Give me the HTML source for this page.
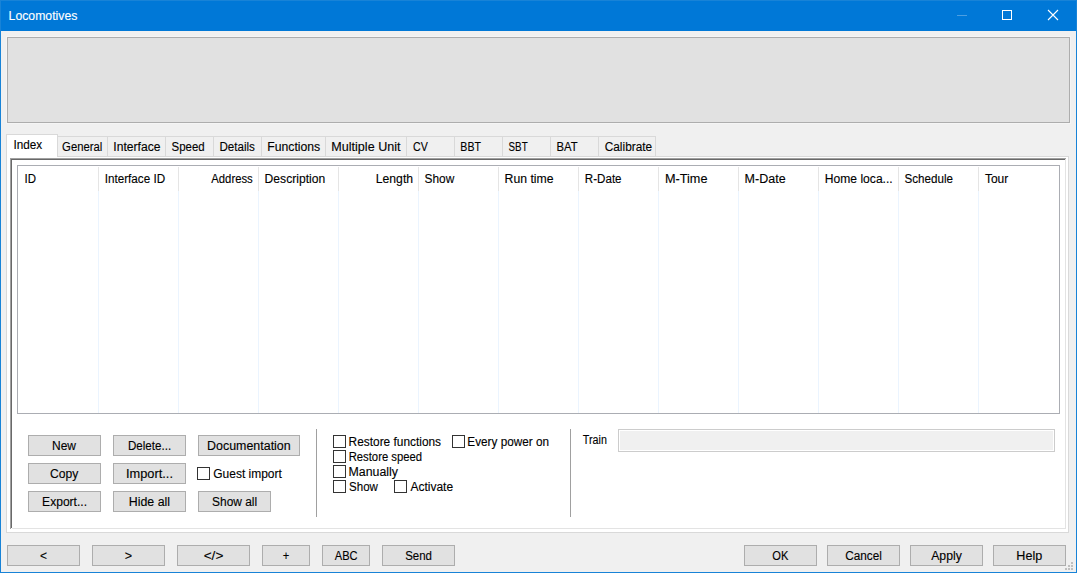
<!DOCTYPE html>
<html><head><meta charset="utf-8"><title>Locomotives</title>
<style>
html,body{margin:0;padding:0}
body{width:1077px;height:573px;overflow:hidden;background:#f0f0f0;position:relative;
 font-family:"Liberation Sans",sans-serif;font-size:12px;line-height:14px;color:#000}
.a{position:absolute;box-sizing:border-box;white-space:nowrap}
.t{z-index:5;-webkit-text-stroke:0.12px currentColor}
.ti{color:#fff}
#tb{left:0;top:0;width:1077px;height:31px;background:#0078d7}
#bl{left:0;top:0;width:1px;height:573px;background:#1883d7}
#br{left:1076px;top:0;width:1px;height:573px;background:#1883d7}
#bb{left:0;top:572px;width:1077px;height:1px;background:#1883d7}
#bt{left:0;top:0;width:1077px;height:1px;background:#1883d7}
#panel{left:7px;top:37px;width:1063px;height:86px;background:#e1e1e1;border:1px solid #adadad;box-shadow:0 0 0 1px #f5f5f5}
.tab{top:136px;height:20px;background:#f0f0f0;border:1px solid #d9d9d9;border-left:none;border-bottom:none}
#tsel{left:6px;top:134px;width:52px;height:23px;background:#fff;border:1px solid #d9d9d9;border-bottom:none;z-index:2}
#pane{left:6px;top:156px;width:1063px;height:377px;background:#fff;border:1px solid #d9d9d9}
.s1{background:#a0a0a0}.s2{background:#696969}.s3{background:#e3e3e3}
#list{left:17px;top:165px;width:1043px;height:249px;border:1px solid #abadb3;background:#fff}
.hd{top:167px;width:1px;height:24px;background:#e5e5e5}
.gl{top:191px;width:1px;height:222px;background:#ebf4fe}
.btn{height:21px;background:#e1e1e1;border:1px solid #adadad}
.cb{width:13px;height:13px;border:1px solid #333;background:#fff}
.sep{top:429px;width:1px;height:88px;background:#a0a0a0}
.g{width:2px;height:2px;background:#bfbfbf}
#train{left:618px;top:429px;width:437px;height:23px;background:#f0f0f0;border:1px solid #ccc;box-shadow:inset 0 0 0 1px #fff}
</style></head><body>
<div class="a" id="tb"></div>
<svg class="a" style="left:950px;top:0" width="120" height="31" viewBox="0 0 120 31">
 <rect x="7" y="15" width="10" height="1" fill="#4c9fe2"/>
 <rect x="52.5" y="10.5" width="9" height="9" fill="none" stroke="#fff" stroke-width="1"/>
 <path d="M98 10 L108 20 M108 10 L98 20" stroke="#fff" stroke-width="1.1" fill="none"/>
</svg>
<div class="a" id="panel"></div>
<div class="a" id="pane"></div>
<div class="a" id="tsel"></div>
<div class="a tab" style="left:58px;width:50px"></div><div class="a tab" style="left:108px;width:58px"></div><div class="a tab" style="left:166px;width:48px"></div><div class="a tab" style="left:214px;width:48px"></div><div class="a tab" style="left:262px;width:64px"></div><div class="a tab" style="left:326px;width:81px"></div><div class="a tab" style="left:407px;width:48px"></div><div class="a tab" style="left:455px;width:48px"></div><div class="a tab" style="left:503px;width:48px"></div><div class="a tab" style="left:551px;width:48px"></div><div class="a tab" style="left:599px;width:57px"></div>
<div class="a s1" style="left:10px;top:158px;width:1056px;height:1px"></div>
<div class="a s1" style="left:10px;top:158px;width:1px;height:371px"></div>
<div class="a s2" style="left:11px;top:159px;width:1054px;height:1px"></div>
<div class="a s2" style="left:11px;top:159px;width:1px;height:369px"></div>
<div class="a s3" style="left:1065px;top:159px;width:1px;height:370px"></div>
<div class="a s3" style="left:12px;top:528px;width:1054px;height:1px"></div>
<div class="a" id="list"></div>
<div class="a hd" style="left:98px"></div><div class="a hd" style="left:178px"></div><div class="a hd" style="left:258px"></div><div class="a hd" style="left:338px"></div><div class="a hd" style="left:418px"></div><div class="a hd" style="left:498px"></div><div class="a hd" style="left:578px"></div><div class="a hd" style="left:658px"></div><div class="a hd" style="left:738px"></div><div class="a hd" style="left:818px"></div><div class="a hd" style="left:898px"></div><div class="a hd" style="left:978px"></div>
<div class="a gl" style="left:98px"></div><div class="a gl" style="left:178px"></div><div class="a gl" style="left:258px"></div><div class="a gl" style="left:338px"></div><div class="a gl" style="left:418px"></div><div class="a gl" style="left:498px"></div><div class="a gl" style="left:578px"></div><div class="a gl" style="left:658px"></div><div class="a gl" style="left:738px"></div><div class="a gl" style="left:818px"></div><div class="a gl" style="left:898px"></div><div class="a gl" style="left:978px"></div>
<div class="a btn" style="left:28px;top:435px;width:73px"></div><div class="a btn" style="left:28px;top:463px;width:73px"></div><div class="a btn" style="left:28px;top:491px;width:73px"></div><div class="a btn" style="left:113px;top:435px;width:73px"></div><div class="a btn" style="left:113px;top:463px;width:73px"></div><div class="a btn" style="left:113px;top:491px;width:73px"></div><div class="a btn" style="left:198px;top:435px;width:102px"></div><div class="a btn" style="left:198px;top:491px;width:73px"></div><div class="a btn" style="left:7px;top:545px;width:73px"></div><div class="a btn" style="left:92px;top:545px;width:73px"></div><div class="a btn" style="left:177px;top:545px;width:73px"></div><div class="a btn" style="left:262px;top:545px;width:48px"></div><div class="a btn" style="left:322px;top:545px;width:48px"></div><div class="a btn" style="left:382px;top:545px;width:73px"></div><div class="a btn" style="left:744px;top:545px;width:73px"></div><div class="a btn" style="left:827px;top:545px;width:73px"></div><div class="a btn" style="left:910px;top:545px;width:73px"></div><div class="a btn" style="left:993px;top:545px;width:73px"></div>
<div class="a cb" style="left:197px;top:467px"></div><div class="a cb" style="left:333px;top:435px"></div><div class="a cb" style="left:452px;top:435px"></div><div class="a cb" style="left:333px;top:450px"></div><div class="a cb" style="left:333px;top:465px"></div><div class="a cb" style="left:333px;top:480px"></div><div class="a cb" style="left:394px;top:480px"></div>
<div class="a sep" style="left:316px"></div>
<div class="a sep" style="left:570px"></div>
<div class="a" id="train"></div>
<div class="a g" style="left:1071px;top:562px"></div><div class="a g" style="left:1068px;top:565px"></div><div class="a g" style="left:1071px;top:565px"></div><div class="a g" style="left:1065px;top:568px"></div><div class="a g" style="left:1068px;top:568px"></div><div class="a g" style="left:1071px;top:568px"></div>
<div class="a t ti" style="left:8px;top:9px;transform-origin:0 0;transform:translateX(0.58px) scaleX(1.0207)">Locomotives</div>
<div class="a t" style="left:13px;top:138px;transform-origin:0 0;transform:translateX(0.38px) scaleX(0.9794)">Index</div>
<div class="a t" style="left:62px;top:140px;transform-origin:0 0;transform:translateX(0.12px) scaleX(0.9430)">General</div>
<div class="a t" style="left:113px;top:140px;transform-origin:0 0;transform:translateX(0.28px) scaleX(1.0099)">Interface</div>
<div class="a t" style="left:171px;top:140px;transform-origin:0 0;transform:translateX(0.57px) scaleX(0.9545)">Speed</div>
<div class="a t" style="left:219px;top:140px;transform-origin:0 0;transform:translateX(0.47px) scaleX(0.9654)">Details</div>
<div class="a t" style="left:267px;top:140px;transform-origin:0 0;transform:translateX(0.20px) scaleX(1.0194)">Functions</div>
<div class="a t" style="left:331px;top:140px;transform-origin:0 0;transform:translateX(0.32px) scaleX(1.0479)">Multiple Unit</div>
<div class="a t" style="left:412px;top:140px;transform-origin:0 0;transform:translateX(0.97px) scaleX(0.8851)">CV</div>
<div class="a t" style="left:460px;top:140px;transform-origin:0 0;transform:translateX(0.34px) scaleX(0.8818)">BBT</div>
<div class="a t" style="left:508px;top:140px;transform-origin:0 0;transform:translateX(0.57px) scaleX(0.8170)">SBT</div>
<div class="a t" style="left:556px;top:140px;transform-origin:0 0;transform:translateX(0.55px) scaleX(0.9382)">BAT</div>
<div class="a t" style="left:604px;top:140px;transform-origin:0 0;transform:translateX(0.73px) scaleX(0.9870)">Calibrate</div>
<div class="a t" style="left:24px;top:172px;transform-origin:0 0;transform:translateX(0.52px) scaleX(0.9569)">ID</div>
<div class="a t" style="left:104px;top:172px;transform-origin:0 0;transform:translateX(0.67px) scaleX(0.9750)">Interface ID</div>
<div class="a t" style="right:824px;top:172px;transform-origin:100% 0;transform:translateX(-0.33px) scaleX(0.9401)">Address</div>
<div class="a t" style="left:264px;top:172px;transform-origin:0 0;transform:translateX(0.61px) scaleX(1.0088)">Description</div>
<div class="a t" style="right:663px;top:172px;transform-origin:100% 0;transform:translateX(-0.62px) scaleX(1.0184)">Length</div>
<div class="a t" style="left:424px;top:172px;transform-origin:0 0;transform:translateX(0.50px) scaleX(0.9900)">Show</div>
<div class="a t" style="left:504px;top:172px;transform-origin:0 0;transform:translateX(0.60px) scaleX(1.0197)">Run time</div>
<div class="a t" style="left:584px;top:172px;transform-origin:0 0;transform:translateX(0.85px) scaleX(0.9655)">R-Date</div>
<div class="a t" style="left:664px;top:172px;transform-origin:0 0;transform:translateX(0.97px) scaleX(1.0563)">M-Time</div>
<div class="a t" style="left:744px;top:172px;transform-origin:0 0;transform:translateX(0.60px) scaleX(1.0419)">M-Date</div>
<div class="a t" style="left:824px;top:172px;transform-origin:0 0;transform:translateX(0.79px) scaleX(1.0080)">Home loca...</div>
<div class="a t" style="left:904px;top:172px;transform-origin:0 0;transform:translateX(0.53px) scaleX(0.9700)">Schedule</div>
<div class="a t" style="left:984px;top:172px;transform-origin:0 0;transform:translateX(0.90px) scaleX(0.9998)">Tour</div>
<div class="a t" style="left:-36px;top:439px;width:200px;text-align:center;transform:translateX(0.00px) scaleX(1.0003)">New</div>
<div class="a t" style="left:-36px;top:467px;width:200px;text-align:center;transform:translateX(0.22px) scaleX(1.0109)">Copy</div>
<div class="a t" style="left:-36px;top:495px;width:200px;text-align:center;transform:translateX(0.56px) scaleX(1.0061)">Export...</div>
<div class="a t" style="left:49px;top:439px;width:200px;text-align:center;transform:translateX(0.56px) scaleX(0.9667)">Delete...</div>
<div class="a t" style="left:49px;top:467px;width:200px;text-align:center;transform:translateX(0.48px) scaleX(1.0665)">Import...</div>
<div class="a t" style="left:49px;top:495px;width:200px;text-align:center;transform:translateX(0.42px) scaleX(1.0302)">Hide all</div>
<div class="a t" style="left:148px;top:439px;width:200px;text-align:center;transform:translateX(0.88px) scaleX(1.0355)">Documentation</div>
<div class="a t" style="left:134px;top:495px;width:200px;text-align:center;transform:translateX(0.62px) scaleX(0.9930)">Show all</div>
<div class="a t" style="left:-57px;top:549px;width:200px;text-align:center;transform:translateX(0.55px) scaleX(0.9974)">&lt;</div>
<div class="a t" style="left:28px;top:549px;width:200px;text-align:center;transform:translateX(0.53px) scaleX(1.0473)">&gt;</div>
<div class="a t" style="left:113px;top:549px;width:200px;text-align:center;transform:translateX(0.51px) scaleX(1.1309)">&lt;/&gt;</div>
<div class="a t" style="left:186px;top:549px;width:200px;text-align:center;transform:translateX(0.00px) scaleX(0.9309)">+</div>
<div class="a t" style="left:246px;top:549px;width:200px;text-align:center;transform:translateX(0.19px) scaleX(0.9243)">ABC</div>
<div class="a t" style="left:318px;top:549px;width:200px;text-align:center;transform:translateX(0.61px) scaleX(0.9555)">Send</div>
<div class="a t" style="left:680px;top:549px;width:200px;text-align:center;transform:translateX(0.28px) scaleX(0.9260)">OK</div>
<div class="a t" style="left:763px;top:549px;width:200px;text-align:center;transform:translateX(0.55px) scaleX(0.9812)">Cancel</div>
<div class="a t" style="left:846px;top:549px;width:200px;text-align:center;transform:translateX(0.51px) scaleX(1.0190)">Apply</div>
<div class="a t" style="left:929px;top:549px;width:200px;text-align:center;transform:translateX(0.26px) scaleX(1.0504)">Help</div>
<div class="a t" style="left:213px;top:467px;transform-origin:0 0;transform:translateX(0.23px) scaleX(0.9992)">Guest import</div>
<div class="a t" style="left:348px;top:435px;transform-origin:0 0;transform:translateX(0.62px) scaleX(0.9897)">Restore functions</div>
<div class="a t" style="left:467px;top:435px;transform-origin:0 0;transform:translateX(0.34px) scaleX(0.9797)">Every power on</div>
<div class="a t" style="left:348px;top:450px;transform-origin:0 0;transform:translateX(0.64px) scaleX(0.9416)">Restore speed</div>
<div class="a t" style="left:348px;top:465px;transform-origin:0 0;transform:translateX(0.49px) scaleX(1.0295)">Manually</div>
<div class="a t" style="left:349px;top:480px;transform-origin:0 0;transform:translateX(0.02px) scaleX(0.9618)">Show</div>
<div class="a t" style="left:410px;top:480px;transform-origin:0 0;transform:translateX(0.41px) scaleX(1.0011)">Activate</div>
<div class="a t" style="left:582px;top:433px;transform-origin:0 0;transform:translateX(0.81px) scaleX(0.8937)">Train</div>
<div class="a" id="bt"></div><div class="a" id="bl"></div><div class="a" id="br"></div><div class="a" id="bb"></div>
</body></html>
